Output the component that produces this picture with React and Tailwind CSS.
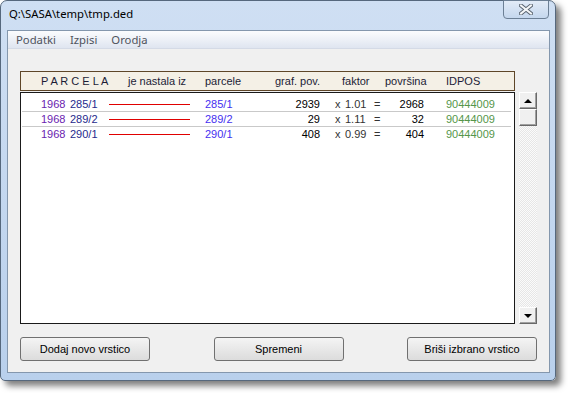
export default function App() {
  const rows = [
    { year: "1968", from: "285/1", to: "285/1", graf: "2939", factor: "1.01", area: "2968", idpos: "90444009" },
    { year: "1968", from: "289/2", to: "289/2", graf: "29", factor: "1.11", area: "32", idpos: "90444009" },
    { year: "1968", from: "290/1", to: "290/1", graf: "408", factor: "0.99", area: "404", idpos: "90444009" },
  ];

  const btn =
    "w-[130px] h-[24px] rounded-[3px] border border-[#707070] bg-gradient-to-b from-[#f4f4f4] to-[#dcdcdc] text-black text-[11px] font-normal";
  const scrollBtn =
    "h-[17px] flex items-center justify-center bg-[#f0f0f0] border border-t-white border-l-white border-r-[#696969] border-b-[#696969] shadow-[inset_-1px_-1px_0_#a0a0a0]";

  return (
    <div className="w-[568px] h-[393px] bg-white overflow-hidden font-['Liberation_Sans',Arial,sans-serif]">
      {/* Window */}
      <div className="w-[556px] h-[381px] flex flex-col rounded-t-[7px] rounded-b-[5px] border border-[#56687d] bg-gradient-to-b from-[#cfdff3] to-[#b9d0ec] shadow-[5px_5px_6px_rgba(0,0,0,0.5)]">
        {/* Title bar */}
        <div className="h-[29px] flex items-start shrink-0">
          <div className="pl-[8px] pt-[7px] text-[11.3px] text-black font-['Noto_Sans',sans-serif] leading-none">
            Q:\SASA\temp\tmp.ded
          </div>
          <div className="ml-auto mr-[6px] w-[46px] h-[19px] -mt-px flex items-center justify-center rounded-b-[4px] border border-[#6c7f95] bg-gradient-to-b from-[#e2ebf7] to-[#c5d7ee]">
            <svg width="14" height="11" viewBox="0 0 14 11">
              <path d="M2 1.5 L12 9.5 M12 1.5 L2 9.5" stroke="#5a6470" strokeWidth="4" strokeLinecap="square" />
              <path d="M2 1.5 L12 9.5 M12 1.5 L2 9.5" stroke="#f4f6f8" strokeWidth="2" strokeLinecap="square" />
            </svg>
          </div>
        </div>

        {/* Client area */}
        <div className="ml-[6px] mr-[5px] flex-1 flex flex-col border border-[#8497ad] bg-[#f0f0f0]">
          {/* Menu bar */}
          <div className="h-[18px] shrink-0 flex items-center gap-[14px] pl-[8px] bg-gradient-to-b from-[#fbfcfe] to-[#dfe5f0] border-b border-[#d4dae6] text-[11.3px] text-[#4f535c] font-['Noto_Sans',sans-serif] leading-none">
            <span>Podatki</span>
            <span>Izpisi</span>
            <span>Orodja</span>
          </div>

          <div className="flex-1 flex flex-col px-[12px] pt-[22px] pb-[11px] text-[11px] leading-none">
            {/* Header + list + scrollbar */}
            <div className="flex gap-[4px]">
              <div className="w-[495px] flex flex-col gap-px">
                {/* Column header */}
                <div className="h-[20px] flex items-center pl-[20px] border border-[#5e4628] bg-[#f4f0e6] text-[#1c1c36] whitespace-nowrap">
                  <span className="w-[87px]">P A R C E L A</span>
                  <span className="w-[77px]">je nastala iz</span>
                  <span className="w-[70px]">parcele</span>
                  <span className="w-[45px] text-right">graf. pov.</span>
                  <span className="ml-[22px] w-[43px]">faktor</span>
                  <span className="w-[61px]">površina</span>
                  <span>IDPOS</span>
                </div>

                {/* List */}
                <div className="h-[232px] border border-[#1a1a1a] bg-white pt-[4px]">
                  {rows.map((r, i) => (
                    <div
                      key={i}
                      className={
                        "h-[15px] flex items-center pl-[19px] ml-px mr-[3px] whitespace-nowrap " +
                        (i < rows.length - 1 ? "border-b border-[#c9c9c9]" : "")
                      }
                    >
                      <span className="w-[29px] text-[#6a22b0]">{r.year}</span>
                      <span className="w-[39px] text-[#1f2a8c]">{r.from}</span>
                      <span className="w-[81px] h-px bg-[#e00000]" />
                      <span className="w-[15px]" />
                      <span className="w-[70px] text-[#452ff0]">{r.to}</span>
                      <span className="w-[45px] text-right text-black">{r.graf}</span>
                      <span className="ml-[15px] w-[10px] text-[#333]">x</span>
                      <span className="w-[29px] text-[#333]">{r.factor}</span>
                      <span className="w-[10px] text-[#333]">=</span>
                      <span className="w-[40px] text-right text-black">{r.area}</span>
                      <span className="ml-[22px] text-[#55964a]">{r.idpos}</span>
                    </div>
                  ))}
                </div>
              </div>

              {/* Scrollbar */}
              <div className="w-[18px] h-[232px] mt-[21px] flex flex-col bg-[repeating-conic-gradient(#fbfbfb_0%_25%,#e6e6e6_0%_50%)] bg-size-[2px_2px]">
                <div className={scrollBtn}>
                  <div className="w-0 h-0 border-x-[4px] border-x-transparent border-b-[4px] border-b-black" />
                </div>
                <div className={scrollBtn} />
                <div className="flex-1" />
                <div className={scrollBtn}>
                  <div className="w-0 h-0 border-x-[4px] border-x-transparent border-t-[4px] border-t-black" />
                </div>
              </div>
            </div>

            {/* Buttons */}
            <div className="mt-auto flex justify-between">
              <button className={btn}>Dodaj novo vrstico</button>
              <button className={btn}>Spremeni</button>
              <button className={btn}>Briši izbrano vrstico</button>
            </div>
          </div>
        </div>

        {/* Bottom frame */}
        <div className="h-[7px] shrink-0" />
      </div>
    </div>
  );
}
